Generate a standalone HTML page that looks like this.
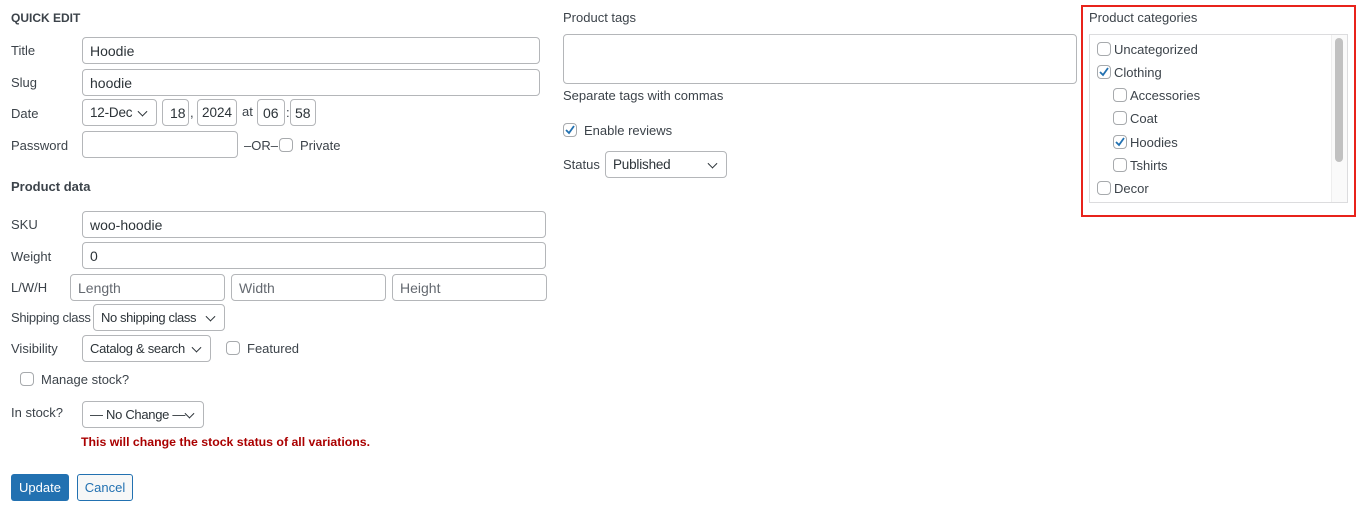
<!DOCTYPE html>
<html><head><style>
*{box-sizing:border-box;margin:0;padding:0}
body{width:1366px;height:511px;background:#fff;font-family:"Liberation Sans",sans-serif;color:#3c434a;font-size:13px;position:relative;overflow:hidden}
.a{position:absolute;white-space:nowrap}
.t{position:absolute;line-height:16px;transform:translateY(-7px);white-space:nowrap}
.in{position:absolute;border:1px solid #b4b6b9;border-radius:4px;background:#fff;font-size:14px;color:#2c3338;padding-left:7px;display:flex;align-items:center;white-space:nowrap;overflow:hidden}
.sel{font-size:13.5px;letter-spacing:-0.2px}
.ph{color:#646970}
.cb{position:absolute;width:14px;height:14px;border:1px solid #a7aaad;border-radius:4px;background:#fff}
.sel::after{content:"";position:absolute;right:10px;top:50%;width:6px;height:6px;border-right:1.5px solid #2c3338;border-bottom:1.5px solid #2c3338;transform:translateY(-70%) rotate(45deg);background:#fff}
.ck{position:absolute;left:1px;top:1px;width:10px;height:10px}
</style></head><body>
<div class="t" style="left:11px;top:17px;font-weight:bold;font-size:12px">QUICK EDIT</div>
<div class="t" style="left:11px;top:50px">Title</div>
<div class="in" style="left:82px;top:37px;width:458px;height:27px">Hoodie</div>
<div class="t" style="left:11px;top:82px">Slug</div>
<div class="in" style="left:82px;top:69px;width:458px;height:27px">hoodie</div>
<div class="t" style="left:11px;top:113px">Date</div>
<div class="in sel" style="left:82px;top:99px;width:75px;height:27px">12-Dec</div>
<div class="in" style="left:162px;top:99px;width:27px;height:27px">18</div>
<div class="t" style="left:190px;top:112px">,</div>
<div class="in" style="left:197px;top:99px;width:40px;height:27px;padding-left:4px;font-size:13.5px">2024</div>
<div class="t" style="left:242px;top:111px">at</div>
<div class="in" style="left:257px;top:99px;width:28px;height:27px;padding-left:5px">06</div>
<div class="t" style="left:286px;top:112px">:</div>
<div class="in" style="left:290px;top:99px;width:26px;height:27px;padding-left:4px">58</div>
<div class="t" style="left:11px;top:145px">Password</div>
<div class="in" style="left:82px;top:131px;width:156px;height:27px"></div>
<div class="t" style="left:244px;top:145px">–OR–</div>
<div class="cb" style="left:279px;top:138px"></div>
<div class="t" style="left:300px;top:145px">Private</div>
<div class="t" style="left:11px;top:186px;font-weight:bold">Product data</div>
<div class="t" style="left:11px;top:224px">SKU</div>
<div class="in" style="left:82px;top:211px;width:464px;height:27px">woo-hoodie</div>
<div class="t" style="left:11px;top:256px">Weight</div>
<div class="in" style="left:82px;top:242px;width:464px;height:27px">0</div>
<div class="t" style="left:11px;top:287px">L/W/H</div>
<div class="in ph" style="left:70px;top:274px;width:155px;height:27px">Length</div>
<div class="in ph" style="left:231px;top:274px;width:155px;height:27px">Width</div>
<div class="in ph" style="left:392px;top:274px;width:155px;height:27px">Height</div>
<div class="t" style="left:11px;top:317px;letter-spacing:-0.3px">Shipping class</div>
<div class="in sel" style="left:93px;top:304px;width:132px;height:27px;font-size:13px;letter-spacing:-0.4px">No shipping class</div>
<div class="t" style="left:11px;top:348px">Visibility</div>
<div class="in sel" style="left:82px;top:335px;width:129px;height:27px;font-size:13px;letter-spacing:-0.3px">Catalog &amp; search</div>
<div class="cb" style="left:226px;top:341px"></div>
<div class="t" style="left:247px;top:348px">Featured</div>
<div class="cb" style="left:20px;top:372px"></div>
<div class="t" style="left:41px;top:379px">Manage stock?</div>
<div class="t" style="left:11px;top:412px">In stock?</div>
<div class="in sel" style="left:82px;top:401px;width:122px;height:27px;font-size:13px;letter-spacing:-0.3px">— No Change —</div>
<div class="t" style="left:81px;top:441px;font-weight:bold;color:#a00;font-size:12.3px">This will change the stock status of all variations.</div>
<div class="a" style="left:11px;top:474px;width:58px;height:27px;background:#2271b1;border-radius:3px;color:#fff;font-size:13px;display:flex;align-items:center;justify-content:center">Update</div>
<div class="a" style="left:77px;top:474px;width:56px;height:27px;border:1px solid #2271b1;background:#f6f7f7;border-radius:3px;color:#2271b1;display:flex;align-items:center;justify-content:center">Cancel</div>

<div class="t" style="left:563px;top:17px">Product tags</div>
<div class="in" style="left:563px;top:34px;width:514px;height:50px"></div>
<div class="t" style="left:563px;top:95px">Separate tags with commas</div>
<div class="cb" style="left:563px;top:123px"><svg class="ck" viewBox="0 0 10 10"><path d="M1 5 L4 8 L9 1" fill="none" stroke="#2271b1" stroke-width="1.8"/></svg></div>
<div class="t" style="left:584px;top:130px">Enable reviews</div>
<div class="t" style="left:563px;top:164px">Status</div>
<div class="in sel" style="left:605px;top:151px;width:122px;height:27px">Published</div>

<div class="a" style="left:1081px;top:5px;width:275px;height:212px;border:2.5px solid #e8231b"></div>
<div class="t" style="left:1089px;top:17px">Product categories</div>
<div class="a" style="left:1089px;top:34px;width:259px;height:169px;border:1px solid #dcdcde"></div>
<div class="a" style="left:1331px;top:35px;width:16px;height:167px;background:#fafafa;border-left:1px solid #eee"></div>
<div class="a" style="left:1335px;top:38px;width:8px;height:124px;background:#c1c1c1;border-radius:4px"></div>
<div class="cb" style="left:1097px;top:42px"></div><div class="t" style="left:1114px;top:49px">Uncategorized</div>
<div class="cb" style="left:1097px;top:65px"><svg class="ck" viewBox="0 0 10 10"><path d="M1 5 L4 8 L9 1" fill="none" stroke="#2271b1" stroke-width="1.8"/></svg></div><div class="t" style="left:1114px;top:72px">Clothing</div>
<div class="cb" style="left:1113px;top:88px"></div><div class="t" style="left:1130px;top:95px">Accessories</div>
<div class="cb" style="left:1113px;top:111px"></div><div class="t" style="left:1130px;top:118px">Coat</div>
<div class="cb" style="left:1113px;top:135px"><svg class="ck" viewBox="0 0 10 10"><path d="M1 5 L4 8 L9 1" fill="none" stroke="#2271b1" stroke-width="1.8"/></svg></div><div class="t" style="left:1130px;top:142px">Hoodies</div>
<div class="cb" style="left:1113px;top:158px"></div><div class="t" style="left:1130px;top:165px">Tshirts</div>
<div class="cb" style="left:1097px;top:181px"></div><div class="t" style="left:1114px;top:188px">Decor</div>
</body></html>
